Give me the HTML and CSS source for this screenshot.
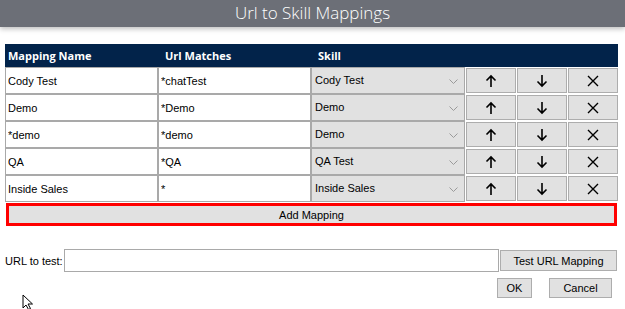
FILE: index.html
```html
<!DOCTYPE html>
<html lang="en">
<head>
    <meta charset="UTF-8">
    <title>Url to Skill Mappings</title>
    <link rel="stylesheet" href="styles.css">
</head>
<body>
    <div class="titlebar">Url to Skill Mappings</div>

    <div class="content">
        <table class="mappings">
            <thead>
                <tr>
                    <th class="c-name">Mapping Name</th>
                    <th class="c-url">Url Matches</th>
                    <th class="c-skill">Skill</th>
                    <th class="c-btn"></th>
                    <th class="c-btn"></th>
                    <th class="c-btn"></th>
                </tr>
            </thead>
            <tbody id="mappingRows">
                <!-- rows are built below -->
            </tbody>
        </table>

        <button class="add-btn">Add Mapping</button>

        <div class="test-row">
            <label for="testUrl">URL to test:</label>
            <input type="text" id="testUrl" class="test-input">
            <button class="win-btn test-btn">Test URL Mapping</button>
        </div>

        <div class="actions">
            <button class="win-btn ok-btn">OK</button>
            <button class="win-btn cancel-btn">Cancel</button>
        </div>
    </div>

    <svg class="cursor" width="14" height="16" viewBox="0 0 14 16">
        <path d="M1 1 L1 14 L4 11 L6.5 15.5 L8.5 14.5 L6 10 L10.5 10 Z" fill="#fff" stroke="#000" stroke-width="1"/>
    </svg>

    <script>
        let mappings = [
            { name: "Cody Test", url: "*chatTest", skill: "Cody Test" },
            { name: "Demo", url: "*Demo", skill: "Demo" },
            { name: "*demo", url: "*demo", skill: "Demo" },
            { name: "QA", url: "*QA", skill: "QA Test" },
            { name: "Inside Sales", url: "*", skill: "Inside Sales" }
        ];

        let up = '<svg width="12" height="14" viewBox="0 0 12 14"><path d="M6 13V2M1.5 6.5L6 2l4.5 4.5" fill="none" stroke="#000" stroke-width="1.6"/></svg>';
        let down = '<svg width="12" height="14" viewBox="0 0 12 14"><path d="M6 1v11M1.5 7.5L6 12l4.5-4.5" fill="none" stroke="#000" stroke-width="1.6"/></svg>';
        let del = '<svg width="12" height="12" viewBox="0 0 12 12"><path d="M1 1l10 10M11 1L1 11" fill="none" stroke="#000" stroke-width="1.4"/></svg>';
        let chevron = '<svg class="chev" width="9" height="6" viewBox="0 0 9 6"><path d="M0.5 0.5L4.5 4.5L8.5 0.5" fill="none" stroke="#9a9a9a" stroke-width="1"/></svg>';

        let tbody = document.getElementById("mappingRows");
        mappings.forEach(m => {
            tbody.innerHTML += `<tr>
                <td><input type="text" class="cell-input" value="${m.name}"></td>
                <td><input type="text" class="cell-input" value="${m.url}"></td>
                <td><div class="skill-select">${m.skill}${chevron}</div></td>
                <td><button class="win-btn row-btn">${up}</button></td>
                <td><button class="win-btn row-btn">${down}</button></td>
                <td><button class="win-btn row-btn">${del}</button></td>
            </tr>`;
        });
    </script>
</body>
</html>
```

FILE: styles.css
```css
* { margin: 0; padding: 0; box-sizing: border-box; }
body {
    width: 625px; height: 309px; overflow: hidden; background: white;
    font-family: "Liberation Sans", Arial, sans-serif; font-size: 11px; color: #000;
    position: relative;
}
.titlebar {
    height: 27px; line-height: 26px; background: #6c6f77; color: white; text-align: center;
    font-family: "Open Sans", sans-serif; font-size: 17px; font-weight: 300;
    box-shadow: 0 2px 5px rgba(0, 0, 0, 0.25);
}
.content { padding: 17px 7px 0 5px; }

.mappings { width: 613px; border-collapse: separate; border-spacing: 0; table-layout: fixed; }
.mappings th {
    height: 23px; background: #02234a; color: white; text-align: left;
    font-family: "Open Sans", sans-serif; font-size: 11px; font-weight: 700;
}
.c-name { width: 153px; padding-left: 3px; }
.c-url { width: 153px; padding-left: 7px; }
.c-skill { width: 154px; padding-left: 7px; }
.c-btn { width: 51px; }
.mappings td { height: 27px; padding: 0; vertical-align: top; }

.cell-input {
    width: 100%; height: 27px; border: 1px solid #a9a9a9; padding: 0 2px;
    font-family: inherit; font-size: 11px; color: #000; background: white; outline: none;
}
.skill-select {
    position: relative; height: 27px; border: 1px solid #a9a9a9; background: #e1e1e1;
    padding: 0 3px; line-height: 25px;
}
.chev { position: absolute; right: 6px; top: 11px; }

.win-btn {
    border: 1px solid #adadad; background: #e1e1e1; color: #000;
    font-family: inherit; font-size: 11px; cursor: pointer;
}
.row-btn {
    display: flex; align-items: center; justify-content: center;
    width: 50px; height: 25px; margin: 1px 0 0 1px;
}

.add-btn {
    display: block; width: 611px; height: 23px; margin: 1px 0 0 1px;
    border: 3px solid #ff0000; background: #e1e1e1;
    font-family: inherit; font-size: 11px; color: #000;
}

.test-row { display: flex; align-items: center; margin-top: 23px; height: 23px; }
.test-row label { width: 59px; white-space: nowrap; }
.test-input { width: 435px; height: 23px; border: 1px solid #a9a9a9; outline: none; }
.test-btn { width: 117px; height: 21px; margin-left: 1px; }

.actions { display: flex; justify-content: flex-end; margin-top: 6px; padding-right: 6px; }
.ok-btn { width: 35px; height: 20px; }
.cancel-btn { width: 63px; height: 20px; margin-left: 17px; }

.cursor { position: absolute; left: 22px; top: 294px; }
```
